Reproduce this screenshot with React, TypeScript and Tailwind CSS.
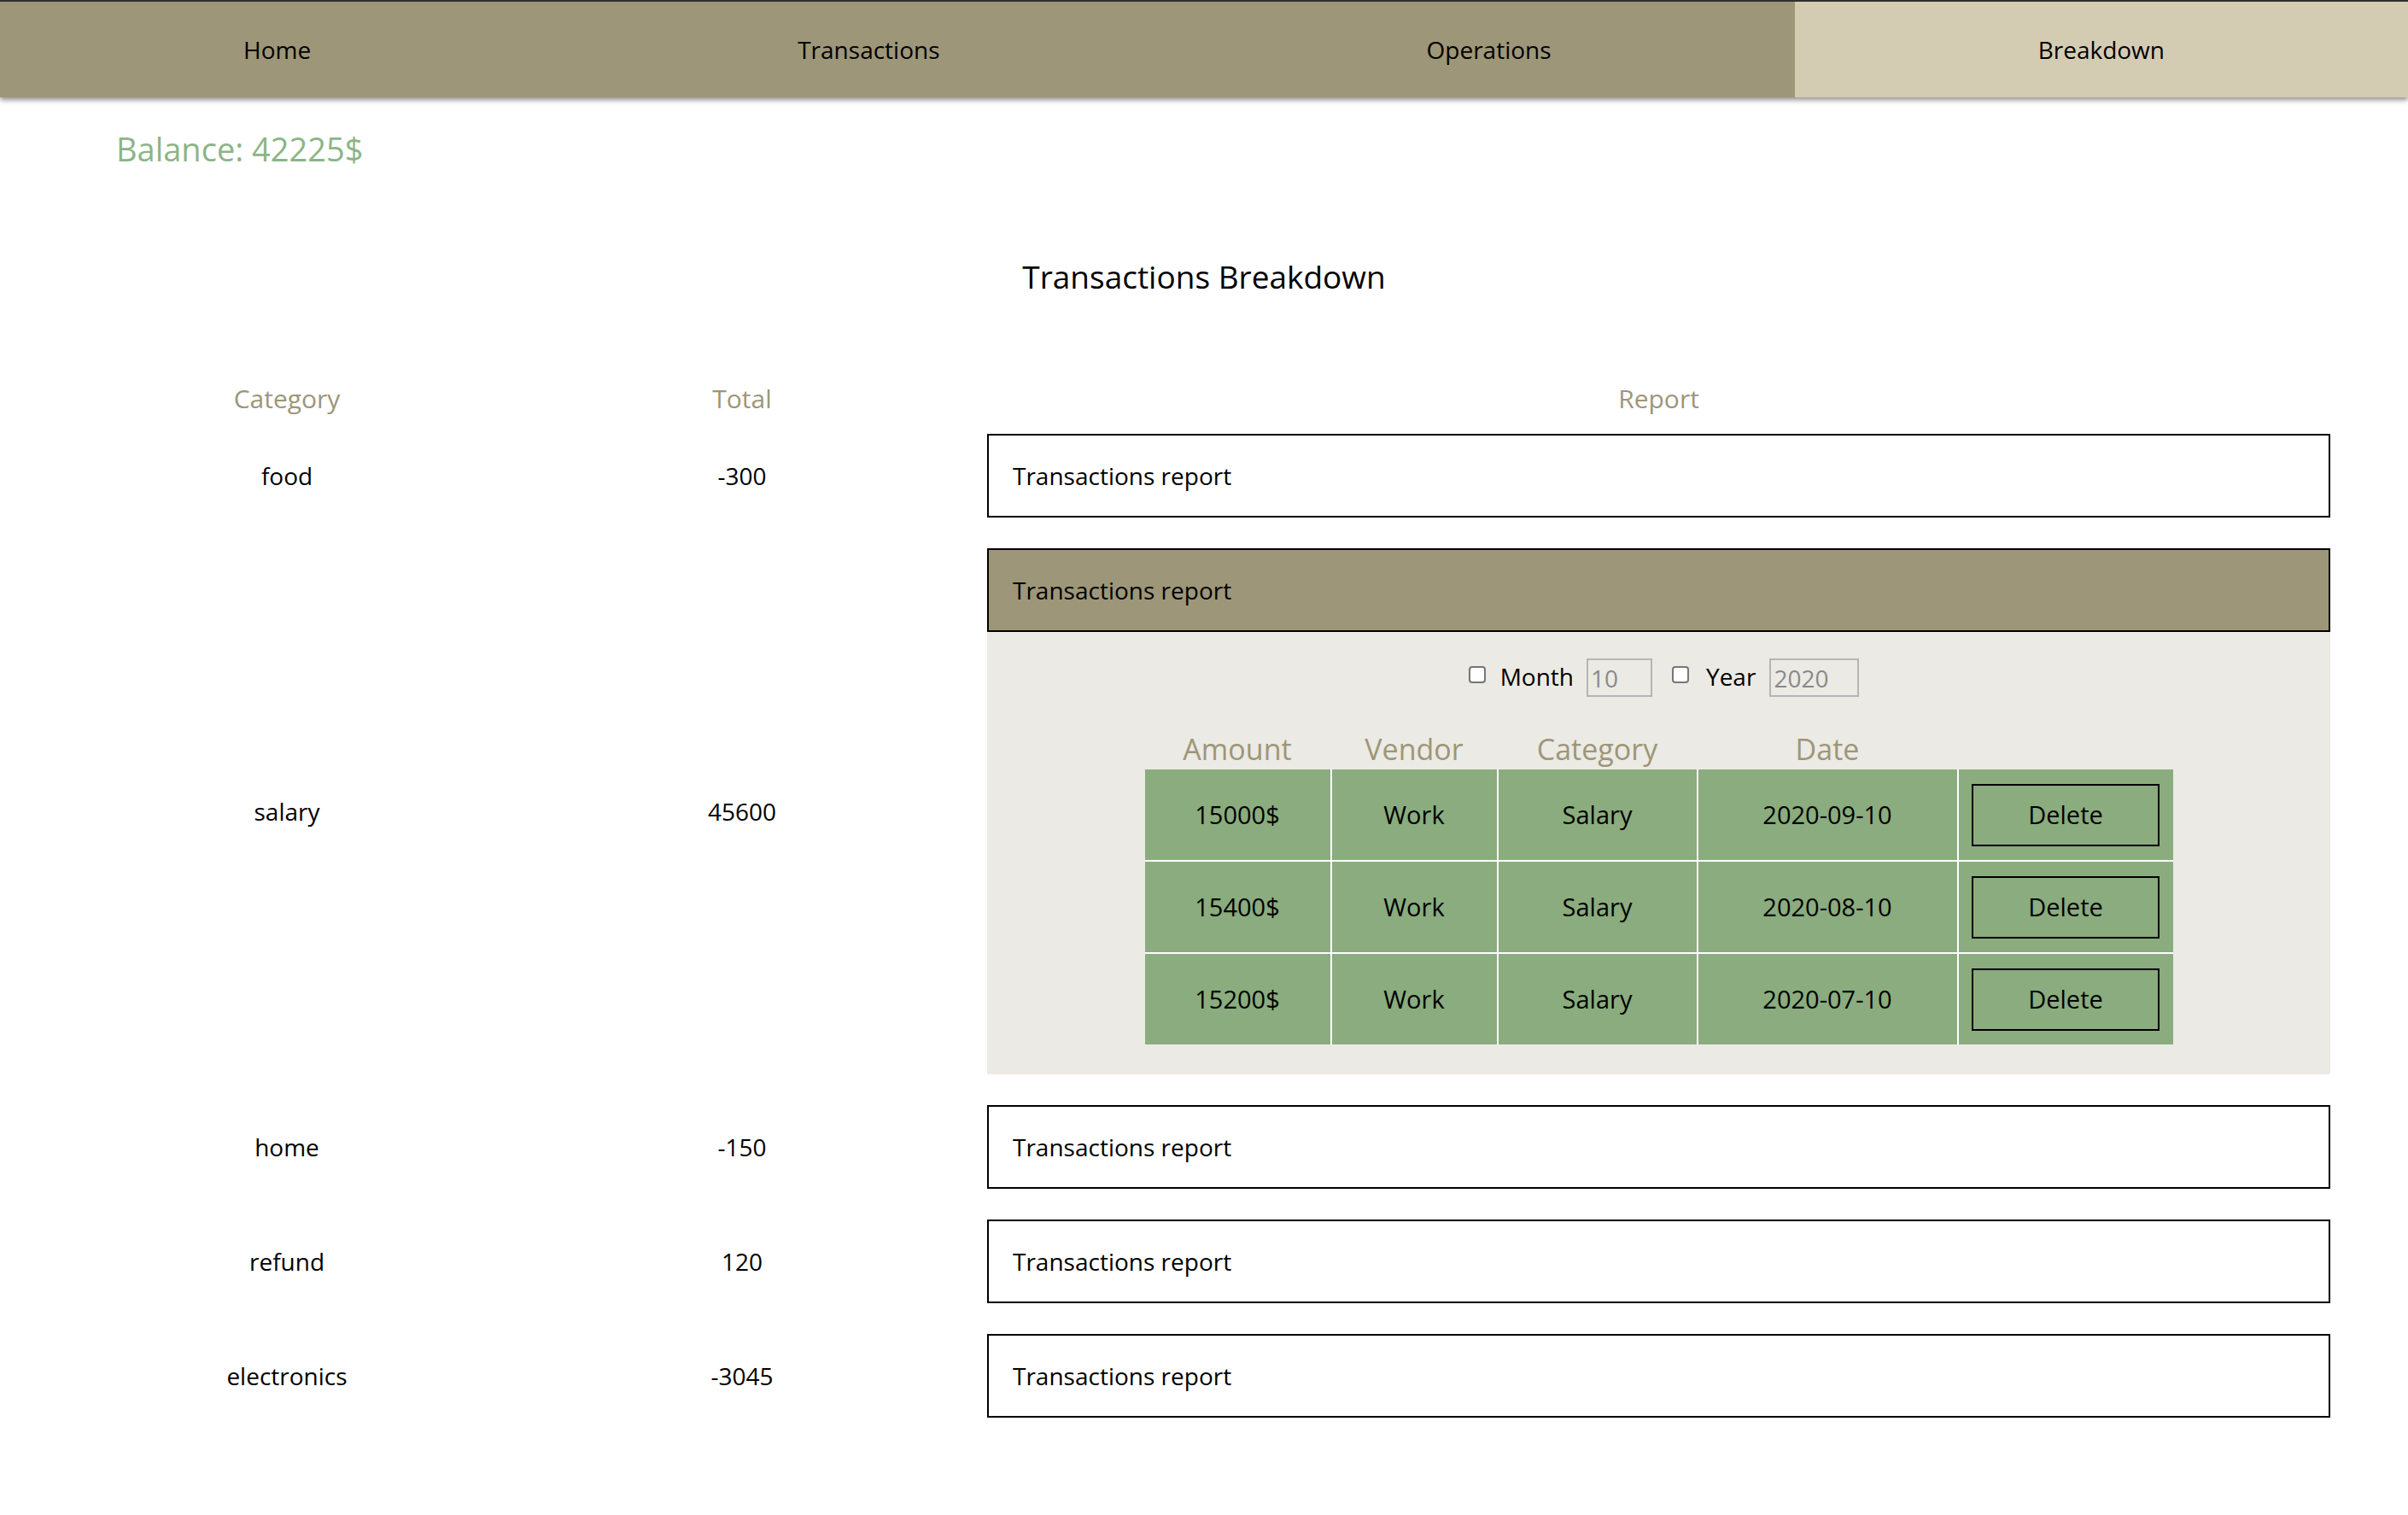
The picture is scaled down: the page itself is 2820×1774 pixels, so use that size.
import React from "react";

const rows = [
  { cat: "food", total: "-300", open: false },
  { cat: "salary", total: "45600", open: true },
  { cat: "home", total: "-150", open: false },
  { cat: "refund", total: "120", open: false },
  { cat: "electronics", total: "-3045", open: false },
];

const tx = [
  { amount: "15000$", vendor: "Work", category: "Salary", date: "2020-09-10" },
  { amount: "15400$", vendor: "Work", category: "Salary", date: "2020-08-10" },
  { amount: "15200$", vendor: "Work", category: "Salary", date: "2020-07-10" },
];

function Checkbox() {
  return (
    <span className="mb-[8px] block h-[20px] w-[20px] shrink-0 rounded-[4px] border-2 border-[#767676] bg-white" />
  );
}

function Panel() {
  return (
    <div className="bg-[#ebeae4] pt-[31px] pb-[35px]">
      <div className="flex h-[45px] items-center justify-center text-[28px] text-black">
        <span className="ml-[12px]">
          <Checkbox />
        </span>
        <span className="mb-[4px] ml-[17px]">Month</span>
        <span className="ml-[15px] flex h-[45px] w-[77px] items-center border-2 border-[#b5b5b5] pl-[3px] text-[#8a8a8a]">
          10
        </span>
        <span className="ml-[23px]">
          <Checkbox />
        </span>
        <span className="mb-[4px] ml-[20px]">Year</span>
        <span className="ml-[16px] flex h-[45px] w-[105px] items-center border-2 border-[#b5b5b5] pl-[3px] text-[#8a8a8a]">
          2020
        </span>
      </div>
      <div className="mt-[38px] flex justify-center">
        <div>
          <div className="grid h-[47px] grid-cols-[217px_193px_232px_303px_251px] gap-x-[2px] text-center text-[34px] leading-[46px] text-[#9d9678]">
            <div>Amount</div>
            <div>Vendor</div>
            <div>Category</div>
            <div>Date</div>
            <div></div>
          </div>
          <div className="grid grid-cols-[217px_193px_232px_303px_251px] gap-[2px] bg-white text-[29px] text-black">
            {tx.map((t) => (
              <React.Fragment key={t.date}>
                <div className="flex h-[106px] items-center justify-center bg-[#8aac7e]">{t.amount}</div>
                <div className="flex h-[106px] items-center justify-center bg-[#8aac7e]">{t.vendor}</div>
                <div className="flex h-[106px] items-center justify-center bg-[#8aac7e]">{t.category}</div>
                <div className="flex h-[106px] items-center justify-center bg-[#8aac7e]">{t.date}</div>
                <div className="flex h-[106px] items-center justify-center bg-[#8aac7e]">
                  <div className="flex h-[73px] w-[220px] items-center justify-center border-2 border-black">
                    Delete
                  </div>
                </div>
              </React.Fragment>
            ))}
          </div>
        </div>
      </div>
    </div>
  );
}

export default function App() {
  return (
    <div className="min-h-screen w-full bg-white font-['Open_Sans',sans-serif] text-black">
      <nav className="relative z-10 flex h-[114px] border-t-2 border-[#2f2f2f] bg-[#9d9678] text-[28px] shadow-[0_3px_6px_rgba(0,0,0,0.45)]">
        <div className="flex grow items-center justify-center">Home</div>
        <div className="flex grow items-center justify-center">Transactions</div>
        <div className="flex grow items-center justify-center">Operations</div>
        <div className="flex grow items-center justify-center bg-[#d3ccb3]">Breakdown</div>
      </nav>

      <div className="mt-[35px] pl-[136px] text-[38px] leading-[50px] text-[#8bb586]">Balance: 42225$</div>

      <h1 className="mt-[100px] text-center text-[37px] leading-[50px] text-black">Transactions Breakdown</h1>

      <div className="ml-[90px] mt-[97px] grid w-[2639px] grid-cols-[492px_574px_1573px]">
        <div className="text-center text-[30px] leading-[41px] text-[#9d9678]">Category</div>
        <div className="text-center text-[30px] leading-[41px] text-[#9d9678]">Total</div>
        <div className="text-center text-[30px] leading-[41px] text-[#9d9678]">Report</div>
      </div>

      <div className="ml-[90px] mt-[21px] flex w-[2639px] flex-col gap-[36px] pb-[100px]">
        {rows.map((r) => (
          <div key={r.cat} className="grid grid-cols-[492px_574px_1573px] text-[28px]">
            <div className="flex items-center justify-center">{r.cat}</div>
            <div className="flex items-center justify-center">{r.total}</div>
            <div>
              <div
                className={
                  r.open
                    ? "flex h-[98px] items-center border-2 border-black bg-[#9d9678] pl-[28px]"
                    : "flex h-[98px] items-center border-2 border-black bg-white pl-[28px]"
                }
              >
                Transactions report
              </div>
              {r.open && <Panel />}
            </div>
          </div>
        ))}
      </div>
    </div>
  );
}
